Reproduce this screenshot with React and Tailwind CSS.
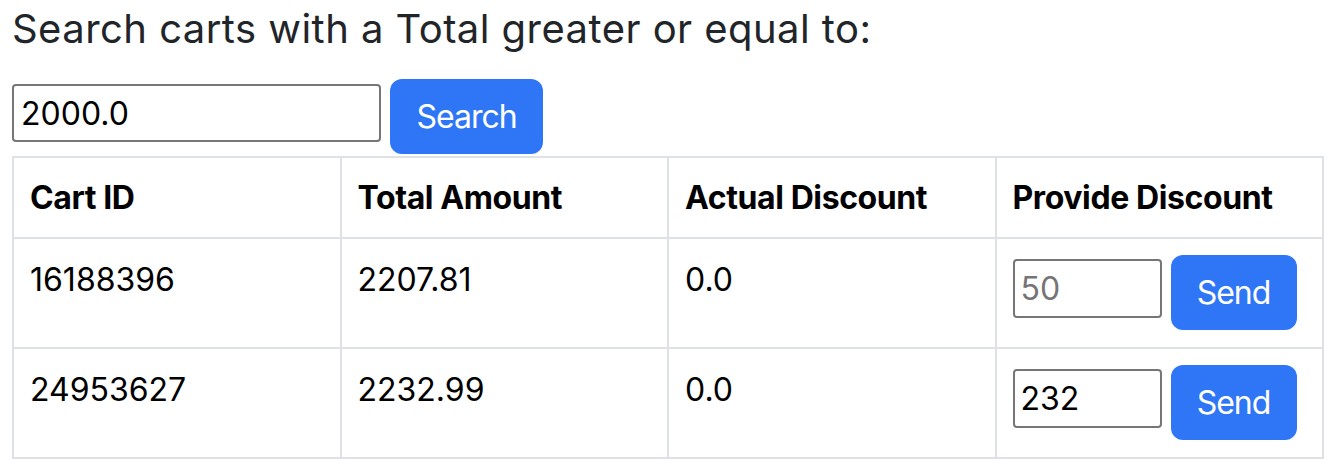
import React from "react";

const rows = [
  { id: "16188396", total: "2207.81", discount: "0.0", value: "", placeholder: "50" },
  { id: "24953627", total: "2232.99", discount: "0.0", value: "232", placeholder: "" },
];

export default function App() {
  return (
    <div className="min-h-[470px] bg-white px-[12px] font-['Inter',sans-serif]">
      <h1 className="pt-[5px] text-[40px] leading-[48px] font-normal tracking-[0.45px] text-[#212529]">
        Search carts with a Total greater or equal to:
      </h1>
      <div className="mt-[26px] flex items-start gap-[9px]">
        <input
          type="text"
          defaultValue="2000.0"
          className="mt-[5px] h-[58px] w-[369px] rounded-[4px] border-2 border-[#767676] bg-white px-[7px] text-[32px] text-black outline-none"
        />
        <button className="h-[75px] w-[153px] rounded-[12px] bg-[#2f76f6] text-[32px] tracking-[-1px] text-white">
          Search
        </button>
      </div>
      <table className="mt-[2px] w-full table-fixed border-collapse border-2 border-[#dee2e6] text-left text-black">
        <thead>
          <tr>
            {["Cart ID", "Total Amount", "Actual Discount", "Provide Discount"].map((h) => (
              <th
                key={h}
                className="border-2 border-[#dee2e6] px-[16px] py-[16px] align-bottom text-[32px] leading-[47px] font-bold tracking-[-0.4px]"
              >
                {h}
              </th>
            ))}
          </tr>
        </thead>
        <tbody>
          {rows.map((r) => (
            <tr key={r.id}>
              <td className="border-2 border-[#dee2e6] px-[16px] pt-[17px] pb-[15px] align-top text-[32px] leading-[48px]">{r.id}</td>
              <td className="border-2 border-[#dee2e6] px-[16px] pt-[17px] pb-[15px] align-top text-[32px] leading-[48px]">{r.total}</td>
              <td className="border-2 border-[#dee2e6] px-[16px] pt-[17px] pb-[15px] align-top text-[32px] leading-[48px]">{r.discount}</td>
              <td className="border-2 border-[#dee2e6] px-[16px] py-[16px] align-top">
                <div className="flex h-[76px] items-start gap-[9px]">
                  <input
                    type="text"
                    defaultValue={r.value}
                    placeholder={r.placeholder}
                    className="mt-[4px] h-[59px] w-[149px] rounded-[4px] border-2 border-[#767676] bg-white px-[6px] text-[32px] text-black outline-none placeholder:text-[#757575]"
                  />
                  <button className="h-[75px] w-[126px] rounded-[12px] bg-[#2f76f6] text-[32px] tracking-[-1px] text-white">
                    Send
                  </button>
                </div>
              </td>
            </tr>
          ))}
        </tbody>
      </table>
    </div>
  );
}
